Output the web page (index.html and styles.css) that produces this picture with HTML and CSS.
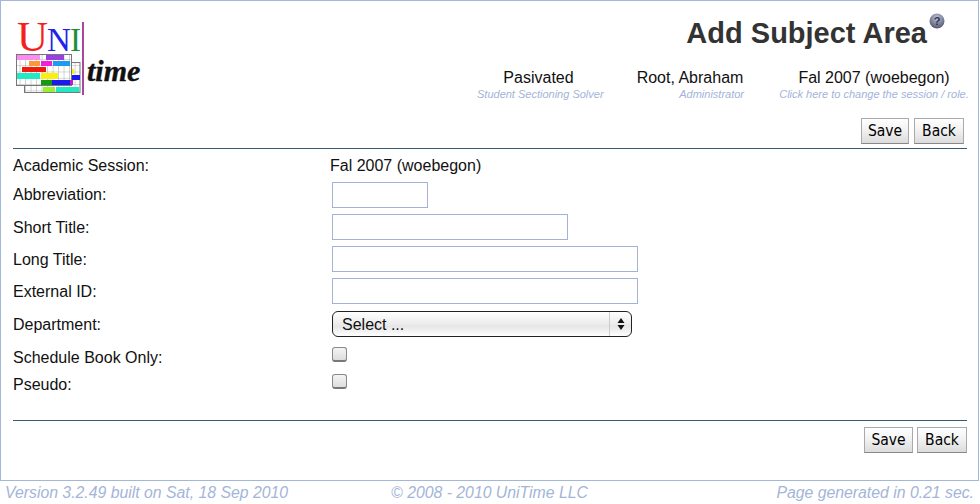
FILE: index.html
```html
<!DOCTYPE html>
<html lang="en">
<head>
    <meta charset="UTF-8">
    <title>Add Subject Area</title>
    <link rel="stylesheet" href="styles.css">
</head>
<body>
    <div class="frame">
        <div class="header">
            <svg class="logo" width="130" height="78" viewBox="0 0 130 78">
                <defs>
                    <pattern id="cells" width="5.5" height="6.3" patternUnits="userSpaceOnUse">
                        <rect width="5.5" height="6.3" fill="#fff"/>
                        <path d="M5.5 0V6.3M0 6.3H5.5" stroke="#aaa" stroke-width="1" fill="none"/>
                    </pattern>
                </defs>
                <text x="2" y="29" class="logo-u">U</text>
                <text x="32" y="29" class="logo-n">N</text>
                <text x="55" y="29" class="logo-i">I</text>
                <rect x="67" y="0" width="2" height="73" fill="#a8479c"/>
                <text x="72" y="59" class="logo-time">time</text>
                <rect x="9.5" y="40.5" width="55.5" height="30" fill="url(#cells)" stroke="#777"/>
                <rect x="1.5" y="32.5" width="55" height="31" fill="url(#cells)" stroke="#777"/>
                <rect x="2" y="33" width="23" height="5" fill="#fb8cf0"/>
                <rect x="31" y="33" width="18" height="5" fill="#9a3fe0"/>
                <rect x="14" y="39" width="11" height="5" fill="#fb9a35"/>
                <rect x="26" y="39" width="11" height="5" fill="#f01fd8"/>
                <rect x="38" y="39" width="17" height="5" fill="#1e9af0"/>
                <rect x="7" y="45" width="24" height="5" fill="#f01a10"/>
                <rect x="2" y="51" width="23" height="6" fill="#22e8c4"/>
                <rect x="26" y="51" width="17" height="6" fill="#f8f010"/>
                <rect x="57" y="47" width="2" height="5" fill="#f8f010"/>
                <rect x="57" y="53" width="8" height="5" fill="#1a1af0"/>
                <rect x="26" y="58" width="11" height="5" fill="#129a12"/>
                <rect x="37" y="58" width="18" height="5" fill="#1a1af0"/>
                <rect x="55" y="58" width="3" height="5" fill="#c01ac8"/>
                <rect x="28" y="65" width="12" height="5" fill="#9cf030"/>
                <rect x="41" y="65" width="23" height="5" fill="#22e8c4"/>
            </svg>
            <div class="header-right">
                <div class="title-row">
                    <h1>Add Subject Area</h1>
                    <svg class="help" width="16" height="16" viewBox="0 0 16 16">
                        <defs>
                            <radialGradient id="ball" cx="50%" cy="30%" r="70%">
                                <stop offset="0" stop-color="#c4c8d8"/>
                                <stop offset="0.6" stop-color="#7c809a"/>
                                <stop offset="1" stop-color="#55586c"/>
                            </radialGradient>
                        </defs>
                        <circle cx="8" cy="8" r="7.5" fill="url(#ball)"/>
                        <text x="8" y="12" class="help-mark">?</text>
                    </svg>
                </div>
                <div class="info-row">
                    <div class="info info-solver">
                        <div>Pasivated</div>
                        <div class="note">Student Sectioning Solver</div>
                    </div>
                    <div class="info info-user">
                        <div>Root, Abraham</div>
                        <div class="note note-right">Administrator</div>
                    </div>
                    <div class="info info-session">
                        <div>Fal 2007 (woebegon)</div>
                        <div class="note">Click here to change the session / role.</div>
                    </div>
                </div>
            </div>
        </div>

        <div class="buttons buttons-top">
            <button class="btn-save">Save</button>
            <button>Back</button>
        </div>
        <div class="line"></div>

        <div class="form">
            <div class="row row-session"><label>Academic Session:</label><span class="session-value">Fal 2007 (woebegon)</span></div>
            <div class="row row-abbv"><label>Abbreviation:</label><input type="text" class="w-abbv"></div>
            <div class="row"><label>Short Title:</label><input type="text" class="w-short"></div>
            <div class="row"><label>Long Title:</label><input type="text" class="w-long"></div>
            <div class="row"><label>External ID:</label><input type="text" class="w-long"></div>
            <div class="row row-select">
                <label>Department:</label>
                <div class="select">
                    <span>Select ...</span>
                    <div class="select-arrows">
                        <svg width="8" height="14" viewBox="0 0 8 14"><path d="M4 1L7.5 6H.5zM4 13L.5 8h7z" fill="#111"/></svg>
                    </div>
                </div>
            </div>
            <div class="row row-check"><label>Schedule Book Only:</label><span class="check"></span></div>
            <div class="row row-check"><label>Pseudo:</label><span class="check"></span></div>
        </div>

        <div class="line line-bottom"></div>
        <div class="buttons buttons-bottom">
            <button class="btn-save-low">Save</button>
            <button>Back</button>
        </div>
    </div>
    <div class="footer">
        <span>Version 3.2.49 built on Sat, 18 Sep 2010</span>
        <span class="footer-mid">&copy; 2008 - 2010 UniTime LLC</span>
        <span class="footer-right">Page generated in 0.21 sec.</span>
    </div>
</body>
</html>
```
FILE: styles.css
```css
body {
    margin: 0;
    background-color: #fff;
    color: #111;
    font-family: "Liberation Sans", Arial, sans-serif;
    font-size: 16px;
    overflow: hidden;
}

.frame {
    box-sizing: border-box;
    width: 979px;
    height: 481px;
    border: 1px solid #a3b8d8;
    padding: 0 12px;
}

.header {
    display: flex;
    justify-content: space-between;
    height: 116px;
}

.logo {
    margin: 21px 0 0 2px;
    overflow: visible;
}

.logo text {
    font-family: "Liberation Serif", serif;
}

.logo .logo-u {
    fill: #f5201c;
    font-size: 43px;
}

.logo .logo-n {
    fill: #2222ee;
    font-size: 33px;
}

.logo .logo-i {
    fill: #1f8f3a;
    font-size: 33px;
}

.logo .logo-time {
    fill: #111;
    font-size: 30px;
    font-style: italic;
    font-weight: bold;
    stroke: #111;
    stroke-width: 0.4;
}

.header-right {
    display: flex;
    flex-direction: column;
    align-items: flex-end;
}

.title-row {
    display: flex;
    align-items: flex-start;
    margin: 12px 21px 0 0;
    height: 56px;
}

h1 {
    margin: 1px 2px 0 0;
    color: #333;
    font-size: 29px;
    font-weight: bold;
    line-height: 38px;
}

.help .help-mark {
    fill: #2c3050;
    font-size: 11px;
    font-weight: bold;
    text-anchor: middle;
}

.info-row {
    display: flex;
    margin-right: -3px;
    line-height: 18px;
    text-align: center;
}

.info-solver { width: 123px; margin-right: 36px; }
.info-user { width: 108px; margin-right: 35px; }
.info-session { width: 190px; }

.note {
    margin-top: 1px;
    color: #a3b3d8;
    font-size: 11px;
    font-style: italic;
    line-height: 12px;
    white-space: nowrap;
}

.note-right {
    text-align: right;
}

.buttons {
    display: flex;
    justify-content: flex-end;
    gap: 4px;
}

.buttons-top {
    gap: 5px;
    margin: 1px 2px 0 0;
}

.buttons-bottom {
    margin-top: 6px;
    margin-right: -1px;
}

button {
    box-sizing: border-box;
    height: 26px;
    padding: 0;
    width: 50px;
    border: 1px solid #aaa;
    border-bottom-color: #888;
    background: linear-gradient(#fff, #f2f2f2 45%, #dcdcdc);
    color: #000;
    font-family: "DejaVu Sans", sans-serif;
    font-size: 15.5px;
    font-stretch: condensed;
}

.btn-save {
    width: 48px;
}

.btn-save-low {
    width: 49px;
}

.line {
    height: 1px;
    margin-top: 4px;
    margin-right: -1px;
    background: #3a5a78;
}

.line-bottom {
    margin-top: 0;
}

.form {
    height: 265px;
    padding-top: 6px;
}

.row {
    display: flex;
    align-items: center;
    height: 32px;
}

.row label {
    width: 319px;
    flex: none;
    padding-top: 2px;
}

.row-session label,
.row-abbv label {
    padding-top: 0;
}

.row-session {
    height: 21px;
}

.row-abbv {
    height: 30px;
    margin: 4px 0 1px;
}

.session-value {
    margin-left: -2px;
}

input[type="text"] {
    box-sizing: border-box;
    height: 26px;
    padding: 0;
    border: 1px solid #a3b3d8;
    background: #fff;
}

.w-abbv { width: 96px; }
.w-short { width: 236px; }
.w-long { width: 306px; }

.row-select {
    height: 36px;
    margin: -1px 0 1px;
}

.select {
    box-sizing: border-box;
    display: flex;
    align-items: center;
    justify-content: space-between;
    width: 300px;
    height: 26px;
    padding-left: 9px;
    border: 1px solid #222;
    border-radius: 6px;
    background: linear-gradient(#fff, #eee 45%, #e6e6e6 60%, #fff);
}

.select span {
    padding-top: 2px;
}

.select-arrows {
    display: flex;
    align-items: center;
    justify-content: center;
    width: 21px;
    height: 24px;
    border-left: 1px solid #ccc;
}

.row-check {
    height: 27px;
}

.check {
    box-sizing: border-box;
    display: block;
    width: 15px;
    height: 15px;
    margin-bottom: 5px;
    border: 1px solid #8a8a8a;
    border-bottom: 2px solid #777;
    border-radius: 3px;
    background: linear-gradient(#f4f4f4, #ddd);
}

.footer {
    display: grid;
    grid-template-columns: 1fr 1fr 1fr;
    padding: 3px 6px 0 5px;
    color: #a3b5d8;
    font-size: 15.8px;
    font-style: italic;
    white-space: nowrap;
}

.footer-mid {
    text-align: center;
}

.footer-right {
    text-align: right;
}
```
